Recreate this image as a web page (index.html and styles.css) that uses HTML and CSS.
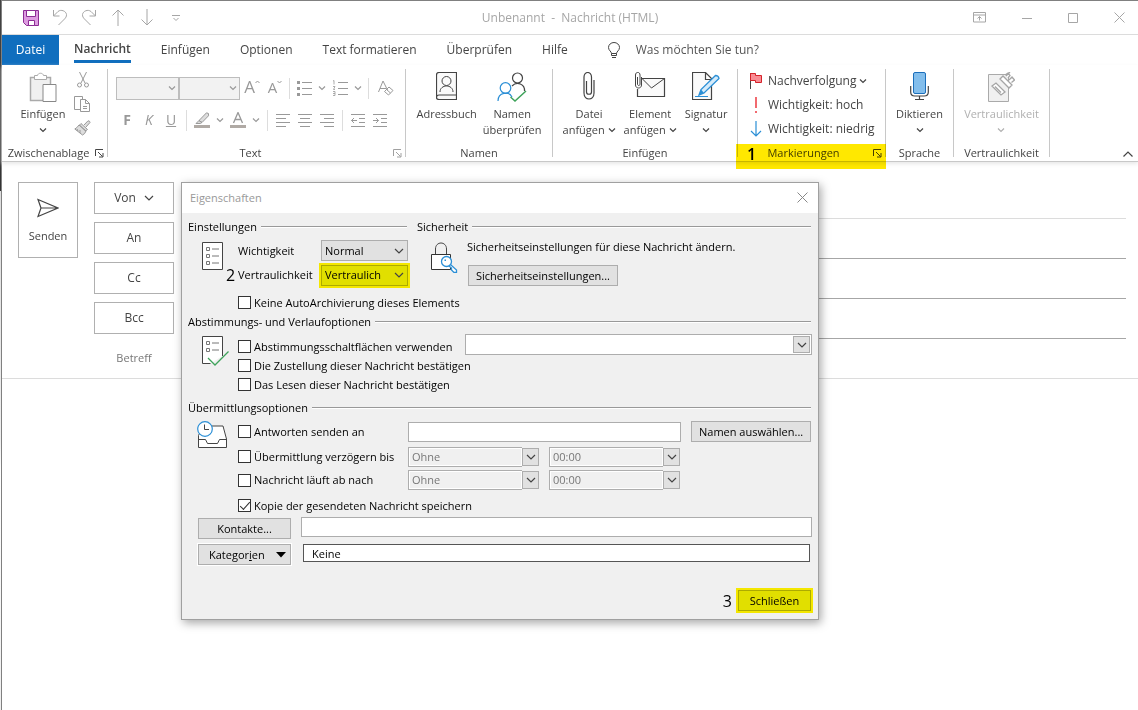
FILE: index.html
```html
<!DOCTYPE html>
<html lang="de">
<head>
<meta charset="utf-8">
<title>Unbenannt - Nachricht (HTML)</title>
<link rel="stylesheet" href="styles.css">
</head>
<body>
<svg class="defs" aria-hidden="true">
  <symbol id="chev" viewBox="0 0 8 8"><path d="M1 2.5 4 5.5 7 2.5" fill="none" stroke="currentColor" stroke-width="1.2"/></symbol>
  <symbol id="chev-lg" viewBox="0 0 10 10"><path d="M1 3 5 7 9 3" fill="none" stroke="currentColor" stroke-width="1.2"/></symbol>
  <symbol id="launch" viewBox="0 0 9 9"><path d="M.5 7V.5H8M3 3l4.5 4.5M8 4v4H4" fill="none" stroke="currentColor"/></symbol>
</svg>
<div class="window">
  <header class="titlebar">
    <div class="quick">
      <button aria-label="Speichern"><svg width="16" height="16"><path d="M.5.5h15v15h-12l-3-3z" fill="#dd9be0" stroke="#8b2c94"/><path d="M3.500.5h9v6h-9zM5.500 10.500h6v5h-6z" fill="#fff" stroke="#8b2c94"/></svg></button>
      <button aria-label="Rückgängig"><svg width="16" height="17"><path d="M1.500 1v6h6M1.500 7 6 2.500c3-2.500 8-.5 8.500 3 .2 2-1 3.500-2 4.500L6.500 16" /></svg></button>
      <button aria-label="Wiederholen"><svg width="16" height="17"><path d="M14.500 1v6h-6M14.500 7 10 2.500c-3-2.500-8-.5-8.500 3-.2 2 1 3.500 2 4.500L9.500 16" /></svg></button>
      <button aria-label="Vorheriges Element"><svg width="12" height="17"><path d="M6 17V1M.5 6.500 6 1l5.500 5.500"/></svg></button>
      <button aria-label="Nächstes Element"><svg width="12" height="17"><path d="M6 0v16M.5 10.500 6 16l5.500-5.500"/></svg></button>
      <button aria-label="Symbolleiste anpassen"><svg width="8" height="8"><path d="M0 1.500h8M1.500 4 4 6.500 6.500 4"/></svg></button>
    </div>
    <h1>Unbenannt&nbsp; -&nbsp; Nachricht (HTML)</h1>
    <div class="controls">
      <button aria-label="Menüband anzeigen"><svg width="13" height="11"><path d="M.5.5h12v9.500H.5zM.5 3h12M6.500 8.500v-4M4.500 6.500l2-2 2 2"/></svg></button>
      <button aria-label="Minimieren"><svg width="10" height="10"><path d="M0 5.500h10"/></svg></button>
      <button aria-label="Maximieren"><svg width="10" height="10"><path d="M.5.5h9v9h-9z"/></svg></button>
      <button aria-label="Schließen"><svg width="11" height="11"><path d="M.5.5l10 10M10.500.5l-10 10"/></svg></button>
    </div>
  </header>

  <nav class="tabs">
    <button class="file">Datei</button>
    <button class="active"><span>Nachricht</span></button>
    <button>Einfügen</button>
    <button>Optionen</button>
    <button>Text formatieren</button>
    <button>Überprüfen</button>
    <button>Hilfe</button>
    <button class="tell"><svg width="12" height="17"><path d="M3.500 11.500c0-2-3-3-3-6a5.500 5 0 0 1 11 0c0 3-3 4-3 6zM3.500 11.500v2h5v-2M4 15.500h4" fill="none" stroke="#444"/></svg>Was möchten Sie tun?</button>
  </nav>

  <section class="ribbon">
    <div class="group clipboard">
      <div class="tools">
        <button class="big"><svg width="28" height="30"><path d="M1.500 5.500h20v23h-20z" fill="#f0f0f0" stroke="#aaa" stroke-width="1.500"/><path d="M5.500 7.500v-4h3c.5-3 5.500-3 6 0h3v4z" fill="#fff" stroke="#aaa"/><path d="M14 12.500h13v17H14z" fill="#fff" stroke="#888"/></svg><span>Einfügen</span><svg class="chev"><use href="#chev"/></svg></button>
        <div class="stack">
          <button aria-label="Ausschneiden"><svg width="12" height="16" fill="none" stroke="#999"><path d="M2.500 0 8 11M9.500 0 4 11"/><circle cx="2.500" cy="13" r="2"/><circle cx="9.500" cy="13" r="2"/></svg></button>
          <button aria-label="Kopieren"><svg width="17" height="17" fill="#fff" stroke="#999"><path d="M.5.5h8v13h-8z"/><path d="M6.500 3.500h5l4 4v8h-9zM11.500 3.500v4h4M9 10.500h4M9 12.500h4"/></svg></button>
          <button aria-label="Format übertragen"><svg width="17" height="16" fill="#ddd" stroke="#999"><path d="M10 5 14 .8q2 0 2 1.700L12 7"/><path d="M7 3.500l6.500 6-2 1.500-6-6zM5 5l7 6q-1 3-3.500 4L.8 9Q3 8 5 5zM3 9l1 2M6 10v3"/></svg></button>
        </div>
      </div>
      <div class="caption"><span>Zwischenablage</span><svg class="launch"><use href="#launch"/></svg></div>
    </div>
    <i class="rule"></i>

    <div class="group text">
      <div class="tools formatting">
        <div class="line">
          <span class="drop"><select aria-label="Schriftart" disabled><option></option></select><svg class="chev"><use href="#chev"/></svg></span>
          <span class="drop"><select aria-label="Schriftgrad" disabled><option></option></select><svg class="chev"><use href="#chev"/></svg></span>
          <button class="letter grow">A<svg width="5" height="4"><path d="M.5 3 2.500 1l2 2"/></svg></button>
          <button class="letter shrink">A<svg width="5" height="4"><path d="M.5 1l2 2 2-2"/></svg></button>
          <i></i>
          <button aria-label="Aufzählung"><svg width="15" height="15"><path d="M0 1.500h3M0 7.500h3M0 13.500h3" stroke-width="3"/><path d="M5 1.500h10M5 7.500h10M5 13.500h10"/></svg></button>
          <svg class="chev"><use href="#chev"/></svg>
          <button aria-label="Nummerierung"><svg width="15" height="16"><path d="M5 2.500h10M5 8.500h10M5 14.500h10"/><path d="M0 1l1-.5v4M0 6.500h2L.5 9.500H2M0 11.500h2v4H0M0 13.500h2" stroke-width=".8"/></svg></button>
          <svg class="chev"><use href="#chev"/></svg>
          <i></i>
          <button class="clear" aria-label="Formatierung löschen"><svg width="16" height="16"><path d="M.5 12 5 1l4.500 9M2 8.500h6"/><path d="M11 7l4 3.500-4.500 4.500-4-3.500zM8.500 9.500l4 3.500"/></svg></button>
        </div>
        <div class="line second">
          <button class="fmt"><b>F</b></button>
          <button class="fmt"><em>K</em></button>
          <button class="fmt"><u>U</u></button>
          <i></i>
          <button aria-label="Texthervorhebung"><svg width="16" height="16"><path d="M0 14.500h16" stroke="#b0aaa5" stroke-width="3"/><path d="M5 8.500 12.500.8q3 0 2 3L8 10.500zM5 8.500l-3 3h4l2-1z" fill="#ddd"/></svg></button>
          <svg class="chev"><use href="#chev"/></svg>
          <button aria-label="Schriftfarbe"><svg width="16" height="16"><path d="M0 14.500h16" stroke="#b0aaa5" stroke-width="3"/><path d="M3.500 11 8 .5 12.500 11M5 7.500h6" stroke-width="1.300"/></svg></button>
          <svg class="chev"><use href="#chev"/></svg>
          <i></i>
          <button aria-label="Linksbündig"><svg width="14" height="13"><path d="M0 .5h14M0 4.500h10M0 8.500h14M0 12.500h10"/></svg></button>
          <button aria-label="Zentriert"><svg width="14" height="13"><path d="M0 .5h14M2 4.500h10M0 8.500h14M2 12.500h10"/></svg></button>
          <button aria-label="Rechtsbündig"><svg width="14" height="13"><path d="M0 .5h14M4 4.500h10M0 8.500h14M4 12.500h10"/></svg></button>
          <i></i>
          <button aria-label="Einzug verkleinern"><svg width="14" height="13"><path d="M0 .5h14M8 4.500h6M8 8.500h6M0 12.500h14M6 6.500H.5M3 4 .5 6.500 3 9"/></svg></button>
          <button aria-label="Einzug vergrößern"><svg width="14" height="13"><path d="M0 .5h14M8 4.500h6M8 8.500h6M0 12.500h14M0 6.500h5.500M3 4l2.500 2.500L3 9"/></svg></button>
        </div>
      </div>
      <div class="caption"><span>Text</span><svg class="launch"><use href="#launch"/></svg></div>
    </div>
    <i class="rule"></i>

    <div class="group names">
      <div class="tools">
        <button class="big"><svg width="21" height="28" fill="none" stroke="#444"><path d="M.5 3Q.5.5 3 .5h17.500v27H3Q.5 27.500.5 25.500zM.5 25.500Q.5 23 3 23h17.500" fill="#fafafa" stroke-width="1.200"/><circle cx="10.500" cy="9" r="4.500"/><path d="M4 20c0-8 13-8 13 0"/></svg><span>Adressbuch</span></button>
        <button class="big"><svg width="30" height="30" fill="none"><g stroke="#444" stroke-width="1.200"><circle cx="20.500" cy="6" r="5"/><path d="M15 14c5-5 13-2 12.500 5"/></g><g stroke="#2b8fd6" stroke-width="1.200"><circle cx="8.500" cy="16" r="5.300"/><path d="M1 29c0-9 11-10 14-4"/></g><path d="M13.500 25l4.500 4L29 19" stroke="#3fa35b" stroke-width="1.500"/></svg><span>Namen<br>überprüfen</span></button>
      </div>
      <div class="caption"><span>Namen</span></div>
    </div>
    <i class="rule"></i>

    <div class="group insert">
      <div class="tools">
        <button class="big"><svg width="12" height="28" fill="none" stroke="#444" stroke-width="1.200"><path d="M3.500 9v11c0 3 5 3 5 0V5c0-6-7.500-6-7.500 0v16c0 8 10 8 10 0V8"/></svg><span>Datei<br>anfügen <svg class="chev"><use href="#chev"/></svg></span></button>
        <button class="big"><svg width="32" height="30" fill="none" stroke="#444"><path d="M8 6.500h22.500v18h-27V17" fill="#fafafa" stroke-width="1.200"/><path d="M8 6.500l9.500 9.500L30.500 6.500"/><path d="M3.500 5v7c0 2 2.500 2 2.500 0V3c0-3.500-4.500-3.500-4.500 0v10c0 4 6 4 6 0V5"/></svg><span>Element<br>anfügen <svg class="chev"><use href="#chev"/></svg></span></button>
        <button class="big"><svg width="28" height="28"><path d="M.5.5h13l6 6v21H.5zM13.500.5v7h6" fill="#fafafa" stroke="#444" stroke-width="1.200"/><path d="M3 24.500h13" stroke="#2b8fd6"/><path d="M7 23l2-5.500L23.500 3.500q3 0 3.500 3L12 21z" fill="#d5ebfa" stroke="#2b8fd6" stroke-width="1.300"/><path d="M7 23l2-5.500 3 3.500z" fill="#2b8fd6"/></svg><span>Signatur</span><svg class="chev"><use href="#chev"/></svg></button>
      </div>
      <div class="caption"><span>Einfügen</span></div>
    </div>
    <i class="rule"></i>

    <div class="group tags">
      <div class="tools list">
        <button><svg width="12" height="16"><path d="M.5 0v16" stroke="#444"/><path d="M.5.5h5v2h6v7h-6v-2h-5z" fill="#f98b93" stroke="#d5232a"/></svg><span>Nachverfolgung <svg class="chev"><use href="#chev"/></svg></span></button>
        <button><svg width="12" height="16"><path d="M6 0v11M6 14v2" stroke="#f05a60" stroke-width="1.800"/></svg><span>Wichtigkeit: hoch</span></button>
        <button><svg width="12" height="16"><path d="M6 0v15M1 10l5 5 5-5" fill="none" stroke="#2b8fd6" stroke-width="1.200"/></svg><span>Wichtigkeit: niedrig</span></button>
      </div>
      <div class="caption"><span>Markierungen</span><svg class="launch"><use href="#launch"/></svg></div>
      <div class="marker"><strong>1</strong></div>
    </div>
    <i class="rule"></i>

    <div class="group voice">
      <div class="tools">
        <button class="big"><svg width="19" height="28" fill="none" stroke="#444"><path d="M.7 14v6q0 4 4 4h9.600q4 0 4-4v-6M9.500 24v3M5 27.500h9" stroke-width="1.200"/><rect x="3.500" y=".5" width="12" height="21" rx="1.500" fill="#83beec" stroke="#1c6fbb"/></svg><span>Diktieren</span><svg class="chev"><use href="#chev"/></svg></button>
      </div>
      <div class="caption"><span>Sprache</span></div>
    </div>
    <i class="rule"></i>

    <div class="group sens">
      <div class="tools">
        <button class="big" disabled><svg width="27" height="30"><path d="M.5 2.500h20v27H.5z" fill="#f0f0f0" stroke="#aaa"/><path d="M4 14l4-3 9 9-4 3zM7 14.500l6 6M12 7l3-3 9 9-3 3zM18 4l4-4M17 3l3-2 2 2.500-2 2.500M21 8l3-3 2.500 3-3 2.500" fill="#fff" stroke="#a5a5a5" stroke-width="1.300"/></svg><span>Vertraulichkeit</span><svg class="chev"><use href="#chev"/></svg></button>
      </div>
      <div class="caption"><span>Vertraulichkeit</span></div>
    </div>
    <i class="rule"></i>
    <button class="collapse" aria-label="Menüband reduzieren"><svg width="10" height="6"><path d="M.5 5.500 5 1l4.500 4.500" fill="none" stroke="#444" stroke-width="1.200"/></svg></button>
  </section>

  <main class="compose">
    <button class="send"><svg width="22" height="20" fill="none" stroke="#444" stroke-width="1.200"><path d="M1 1.500 21 10 1 18.500 4 10zM4 10h17"/></svg>Senden</button>
    <div class="fields">
      <div class="field soft"><button>Von <svg width="10" height="10"><use href="#chev-lg"/></svg></button></div>
      <div class="field"><button>An</button></div>
      <div class="field"><button>Cc</button></div>
      <div class="field"><button>Bcc</button></div>
      <div class="field subject"><span>Betreff</span></div>
    </div>
  </main>
  <div class="message"></div>
</div>

<div class="dialog" role="dialog" aria-labelledby="dlg-title">
  <div class="dialog-title"><h2 id="dlg-title">Eigenschaften</h2><button aria-label="Schließen"><svg width="11" height="11"><path d="M.5.5l10 10M10.500.5l-10 10" stroke="#888"/></svg></button></div>
  <form class="dialog-body">
    <div class="pair">
      <section class="settings">
        <h3>Einstellungen</h3>
        <div class="with-icon">
          <svg width="21" height="28"><path d="M.5.5h20v27H.5z" fill="#fff" stroke="#444"/><path d="M4.500 5.500h3v3h-3zM4.500 12.500h3v3h-3zM4.500 19.500h3v3h-3zM10 7h7M10 14h7M10 21h7" fill="none" stroke="#777"/></svg>
          <div>
            <div class="setting"><label for="imp">Wichtigkeit</label><span class="pick"><select id="imp"><option>Normal</option></select><svg width="10" height="10"><use href="#chev-lg"/></svg></span></div>
            <div class="setting"><strong class="step two">2</strong><label for="sens">Vertraulichkeit</label><span class="pick marked"><select id="sens"><option>Vertraulich</option></select><svg width="10" height="10"><use href="#chev-lg"/></svg></span></div>
            <label class="check archive"><input type="checkbox">Keine AutoArchivierung dieses Elements</label>
          </div>
        </div>
      </section>
      <section class="security">
        <h3>Sicherheit</h3>
        <div class="with-icon">
          <svg width="27" height="31"><path d="M4.500 13V7c0-8 11-8 11 0v6" fill="none" stroke="#444"/><path d="M.5 12.500h19v15H.5z" fill="#fff" stroke="#333"/><path d="M14.500 18 25.500 28v2.500H23L20.500 28v-2l-5-4" fill="#fff" stroke="#2b8fd6" stroke-width="1.300"/><circle cx="15.500" cy="19.500" r="5" fill="#fff" stroke="#2b8fd6" stroke-width="1.300"/><path d="M13.500 17.500h1.500v1.500h-1.500z" fill="#2b8fd6"/></svg>
          <div><p>Sicherheitseinstellungen für diese Nachricht ändern.</p><button type="button" class="btn">Sicherheitseinstellungen...</button></div>
        </div>
      </section>
    </div>

    <section class="voting">
      <h3>Abstimmungs- und Verlaufoptionen</h3>
      <div class="with-icon">
        <svg width="28" height="31"><path d="M20.500 20V.5H.5v27h8" fill="#fff" stroke="#444"/><path d="M4.500 5.500h3v3h-3zM4.500 12.500h3v3h-3zM10 7h7M10 14h7" fill="none" stroke="#777"/><path d="M6 22l7 7L26.500 15.500" fill="none" stroke="#3fa35b" stroke-width="1.300"/></svg>
        <div>
          <div class="vote"><label class="check"><input type="checkbox">Abstimmungsschaltflächen verwenden</label><span class="combo"><input type="text" aria-label="Abstimmungsschaltflächen"><button type="button" aria-label="Auswählen"><svg width="10" height="10"><use href="#chev-lg"/></svg></button></span></div>
          <label class="check"><input type="checkbox">Die Zustellung dieser Nachricht bestätigen</label>
          <label class="check"><input type="checkbox">Das Lesen dieser Nachricht bestätigen</label>
        </div>
      </div>
    </section>

    <section class="delivery">
      <h3>Übermittlungsoptionen</h3>
      <div class="with-icon">
        <svg width="31" height="28"><path d="M1.500 18V14.500L6 5h20l3.500 13v8.500h-28z" fill="#fff" stroke="#444"/><path d="M1.500 18.500h7l2 4h10l2-4h7" fill="none" stroke="#444"/><circle cx="8" cy="8" r="7.300" fill="#fff" stroke="#2b8fd6" stroke-width="1.200"/><path d="M7.500 3.500v5H12" fill="none" stroke="#444"/></svg>
        <div class="options">
          <label class="check"><input type="checkbox">Antworten senden an</label>
          <input class="box wide" type="text" aria-label="Antworten senden an">
          <button type="button" class="btn choose">Namen auswählen...</button>
          <label class="check"><input type="checkbox">Übermittlung verzögern bis</label>
          <span class="date"><input type="text" value="Ohne" aria-label="Verzögern Datum" disabled><button type="button" aria-label="Datum"><svg width="10" height="10"><use href="#chev-lg"/></svg></button></span>
          <span class="date time"><input type="text" value="00:00" aria-label="Verzögern Uhrzeit" disabled><button type="button" aria-label="Uhrzeit"><svg width="10" height="10"><use href="#chev-lg"/></svg></button></span>
          <label class="check"><input type="checkbox">Nachricht läuft ab nach</label>
          <span class="date"><input type="text" value="Ohne" aria-label="Ablauf Datum" disabled><button type="button" aria-label="Datum"><svg width="10" height="10"><use href="#chev-lg"/></svg></button></span>
          <span class="date time"><input type="text" value="00:00" aria-label="Ablauf Uhrzeit" disabled><button type="button" aria-label="Uhrzeit"><svg width="10" height="10"><use href="#chev-lg"/></svg></button></span>
          <label class="check copy"><input type="checkbox" checked>Kopie der gesendeten Nachricht speichern</label>
        </div>
      </div>
      <div class="assign"><button type="button" class="btn">Kontakte...</button><input class="box" type="text" aria-label="Kontakte"></div>
      <div class="assign categories"><button type="button" class="btn"><span>Kategor<u>i</u>en</span><svg width="10" height="6"><path d="M0 0h10L5 5.500z"/></svg></button><input class="box dark" type="text" value="Keine" aria-label="Kategorien"></div>
    </section>
    <footer><strong class="step">3</strong><button type="button" class="btn marked">Schließen</button></footer>
  </form>
</div>
</body>
</html>
```
FILE: styles.css
```css
*, *::before, *::after { box-sizing: border-box; }
body {
  margin: 0;
  min-height: 100vh;
  position: relative;
  padding-left: 1px;
  background: linear-gradient(#444 0, #333 191px, #ddd 191px, #eee 440px, #fff 470px, #eee 100%);
  font: 12px/16px "Open Sans", "Noto Sans", sans-serif;
  color: #444;
}
button, input, select { font: inherit; color: inherit; margin: 0; }
button { border: 0; padding: 0; background: none; }
h1, h2, h3, p { margin: 0; font-size: inherit; font-weight: 400; }
svg { display: block; flex: none; }
.defs { display: none; }
.chev { width: 8px; height: 8px; }
.launch { width: 9px; height: 9px; }

.window {
  min-height: 100vh;
  display: flex;
  flex-direction: column;
  background: #fff;
  border-left: 1px solid #808080;
  border-top: 1px solid #808080;
}

.titlebar {
  display: grid;
  grid-template-columns: 1fr auto 1fr;
  align-items: center;
  height: 34px;
  border-bottom: 1px solid #dcdcdc;
  color: #a6a6a6;
}
.titlebar svg { fill: none; stroke: #a6a6a6; }
.quick { display: flex; padding-left: 14px; }
.quick button { display: grid; place-items: center; width: 29px; height: 30px; }
.controls { display: flex; align-items: center; justify-content: flex-end; gap: 36px; padding-right: 13px; }

.tabs { display: flex; height: 30px; font-size: 12px; }
.tabs button { padding: 0 15px; white-space: nowrap; }
.tabs .file { width: 57px; padding: 0; background: #106ebe; color: #fff; }
.tabs .active { display: flex; align-items: flex-end; padding-bottom: 2px; font-weight: 600; }
.active span { height: 22px; border-bottom: 3px solid #106ebe; }
.tabs .tell { display: flex; align-items: center; gap: 16px; margin-left: 10px; color: #555; }

.ribbon {
  display: flex;
  height: 97px;
  border-bottom: 1px solid #c8c8c8;
  box-shadow: 0 2px 4px #e8e8e8;
  position: relative;
}
.rule { flex: none; width: 1px; margin: 4px 0; background: #c8c8c8; }
.group { position: relative; display: flex; flex-direction: column; flex: none; }
.tools { flex: 1; display: flex; justify-content: center; }
.caption { display: flex; align-items: center; height: 16px; white-space: nowrap; font-size: 11px; }
.caption span { flex: 1; text-align: center; }
.clipboard { width: 105px; }
.text { width: 297px; }
.names { width: 146px; }
.insert { width: 184px; }
.tags { width: 147px; }
.voice { width: 67px; }
.sens { width: 95px; }
.caption .launch { margin-right: 3px; }
.text .launch { color: #a0a0a0; }

.big { display: flex; flex-direction: column; align-items: center; padding-top: 7px; white-space: nowrap; font-size: 11px; }
.big > svg:first-child { margin-bottom: 4px; }
.big > svg[height="28"] { margin-bottom: 6px; }
.big > .chev { margin-top: 4px; }
.big span .chev { display: inline-block; }
.big:disabled { color: #b0b0b0; }
.clipboard .tools { justify-content: flex-start; padding-left: 10px; }
.clipboard .big { width: 62px; }
.stack { display: flex; flex-direction: column; padding-top: 3px; }
.stack button { display: grid; place-items: center; height: 24px; width: 17px; }
.names .tools { gap: 6px; }
.insert .tools { gap: 8px; }

.formatting { flex-direction: column; justify-content: flex-start; padding: 11px 0 0 8px; gap: 8px; }
.line { display: flex; align-items: center; height: 24px; color: #999; }
.line svg { fill: none; stroke: #999; }
.line use { stroke: none; }
.line button { display: grid; place-items: center; width: 22px; height: 24px; }
.line i { width: 1px; height: 21px; margin: 0 3px; background: #ddd; }
.second i { margin: 0 4px; }
.line > .chev { margin: 0 3px; }
.line .clear { width: 28px; }
.drop { display: grid; width: 63px; }
.drop + .drop { width: 61px; }
.drop > * { grid-area: 1 / 1; }
.drop select { width: 100%; height: 23px; appearance: none; background: #f2f2f2; border: 1px solid #bdbdbd; border-radius: 0; opacity: 1; }
.drop .chev { place-self: center end; margin-right: 3px; }
.line .letter { display: flex; align-items: flex-start; justify-content: center; line-height: 22px; font-size: 17px; width: 24px; }
.line .letter svg { margin-top: 4px; }
.line .shrink { font-size: 15px; width: 22px; }
.fmt { font-size: 14px; }

.list { flex-direction: column; justify-content: flex-start; padding: 4px 0 0 12px; }
.list button { display: flex; align-items: center; gap: 6px; height: 24px; white-space: nowrap; }
.list span { display: flex; align-items: center; gap: 3px; }
.tags .caption span { padding-right: 4px; }
.marker {
  position: absolute;
  left: -2px;
  right: -1px;
  bottom: -8px;
  height: 25px;
  padding-left: 11px;
  background: #ffe800;
  mix-blend-mode: multiply;
  font-size: 16px;
  line-height: 20px;
  color: #000;
}
.marker strong { font-weight: 600; }
.collapse { margin: auto 5px 4px auto; }

.compose { display: flex; align-items: flex-start; margin-top: 16px; border-bottom: 1px solid #dcdcdc; padding-left: 16px; gap: 16px; }
.send { display: flex; flex-direction: column; align-items: center; justify-content: center; gap: 10px; width: 60px; height: 76px; margin-top: 4px; padding-top: 2px; border: 1px solid #b0b0b0; font-size: 11px; }
.fields { flex: 1; padding-right: 12px; }
.field { display: flex; height: 40px; padding-top: 4px; }
.field button, .field span { display: flex; align-items: center; justify-content: center; gap: 8px; width: 80px; height: 32px; border: 1px solid #b0b0b0; }
.field button { font-size: 12px; }
.field::after { content: ""; flex: 1; margin-left: 8px; border-bottom: 1px solid #a6a6a6; margin-bottom: -1px; }
.soft::after { border-color: #dcdcdc; }
.field span { border: 0; color: #777; font-size: 11px; }
.subject::after { display: none; }
.message { flex: 1; }

.dialog {
  position: absolute;
  left: 181px;
  top: 182px;
  width: 638px;
  background: #f0f0f0;
  border: 1px solid #a0a0a0;
  box-shadow: 2px 3px 9px #00000059;
  font-size: 11px;
  color: #000;
}
.dialog-title { display: flex; align-items: center; justify-content: space-between; height: 30px; padding: 0 10px 0 8px; background: #fff; color: #999; font-size: 11px; }
.dialog-title button { margin-bottom: 2px; }
.dialog-body { padding: 5px 7px 8px 6px; }
.dialog h3 { display: flex; align-items: center; gap: 4px; height: 17px; white-space: nowrap; }
.dialog h3::after { content: ""; flex: 1; height: 2px; background: #fff; border-top: 1px solid #999; }
.pair { display: flex; gap: 10px; height: 95px; }
.settings { flex: none; width: 219px; }
.security { flex: 1; }
.with-icon { display: grid; grid-template-columns: 50px minmax(0, 1fr); }
.with-icon > svg { margin: 6px 0 0 14px; }
.settings .with-icon { padding-top: 3px; }
.settings .with-icon > svg, .security .with-icon > svg { margin-top: 4px; }
.setting { position: relative; display: flex; align-items: center; justify-content: space-between; height: 25px; margin-right: -1px; white-space: nowrap; }
.setting + .setting { height: 24px; }
.pick { display: grid; width: 87px; }
.pick > * { grid-area: 1 / 1; }
.pick select { width: 100%; height: 21px; padding: 0 3px; appearance: none; background: #e1e1e1; border: 1px solid #adadad; border-radius: 0; }
.pick svg { place-self: center end; margin-right: 4px; color: #444; }
.marked { box-shadow: 0 0 0 2px #f4e700; }
.pick.marked select, .btn.marked { background: #e1df00; border-color: #adab00; }
.step { font-size: 16px; font-weight: 400; }
.two { position: absolute; left: -12px; }
.check { display: flex; align-items: center; gap: 3px; height: 19px; white-space: nowrap; }
.check input { appearance: none; flex: none; width: 13px; height: 13px; margin: 0; background: #fff; border: 1px solid #333; }
.check input:checked::after { content: ""; display: block; width: 10px; height: 5px; margin: 2px 0 0 1px; border: solid #333; border-width: 0 0 1px 1px; transform: rotate(-48deg); }
.archive { margin-top: 6px; }
.security .with-icon { padding-top: 3px; }
.security p { margin: 1px 0 10px; }
.security .btn { margin-left: 1px; }
.btn { height: 21px; padding: 0 7px; background: #e1e1e1; border: 1px solid #adadad; white-space: nowrap; }
.voting .with-icon { padding-top: 4px; min-height: 69px; }
.voting .with-icon > svg { margin-top: 2px; }
.voting .vote { display: flex; justify-content: space-between; align-items: flex-end; height: 22px; }
.combo { display: flex; width: 347px; height: 21px; margin: 0 -1px 1px 0; padding: 1px; background: #fff; border: 1px solid #adadad; }
.combo input { flex: 1; min-width: 0; border: 0; padding: 0 4px; background: none; }
.combo button, .date button { display: grid; place-items: center; width: 17px; background: #e1e1e1; border: 1px solid #adadad; color: #444; }
.delivery .with-icon > svg { margin: 2px 0 0 9px; }
.delivery .with-icon { padding-top: 3px; }
.options { display: grid; grid-template-columns: 160px 131px 132px 1fr; grid-template-rows: 25px 25px 22px 26px; column-gap: 10px; align-items: center; }
.box { height: 20px; min-width: 0; border: 1px solid #adadad; background: #fff; padding: 0 8px; }
.wide { grid-column: 2 / 4; width: 273px; }
.choose { grid-column: 4; }
.options .time { grid-column: 3 / 5; }
.date { display: flex; height: 20px; width: 131px; }
.date input { flex: 1; min-width: 0; border: 1px solid #adadad; border-right: 0; padding: 0 3px; background: #f0f0f0; box-shadow: inset 0 0 0 1px #fff; color: #777; }
.date button { height: 18px; margin-top: 1px; }
.copy { grid-column: 1 / 5; align-self: end; margin-bottom: 2px; }
.assign { display: flex; align-items: flex-start; gap: 10px; margin: 0 -1px 0 10px; }
.assign .btn { width: 93px; margin-top: 1px; }
.assign .box { flex: 1; }
.categories { margin-top: 4px; margin-right: 1px; gap: 12px; }
.categories .btn { display: flex; align-items: center; justify-content: space-between; padding: 0 4px 0 10px; box-shadow: 0 0 0 1px #fff; }
.categories .box { height: 18px; border-color: #555; margin-top: 1px; }
footer { display: flex; align-items: center; justify-content: flex-end; gap: 6px; margin-top: 25px; }
footer .btn { width: 73px; }
```
